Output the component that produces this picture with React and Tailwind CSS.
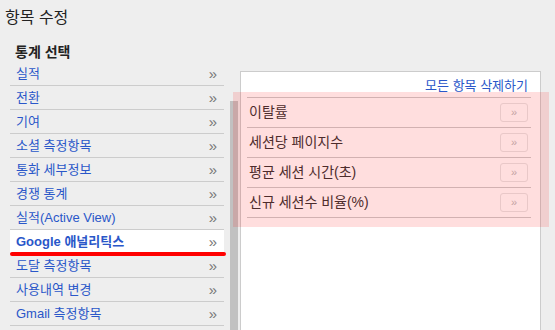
const leftItems = [
  '실적',
  '전환',
  '기여',
  '소셜 측정항목',
  '통화 세부정보',
  '경쟁 통계',
  '실적(Active View)',
  'Google 애널리틱스',
  '도달 측정항목',
  '사용내역 변경',
  'Gmail 측정항목',
]

const selected = ['이탈률', '세션당 페이지수', '평균 세션 시간(초)', '신규 세션수 비율(%)']

export default function App() {
  return (
    <div
      className="relative w-[555px] h-[330px] overflow-hidden bg-[#eeeeee] text-[#222]"
      style={{ fontFamily: '"Liberation Sans", Arial, "Noto Sans CJK KR", sans-serif' }}
    >
      <div className="pl-[5px] pt-[7px] text-[16px] leading-[22px] text-[#222]">항목 수정</div>

      <div className="flex">
        {/* stat list */}
        <div className="ml-[10px] w-[214px] shrink-0">
          <div className="pl-[5px] pt-[14px] pb-[1px] text-[14px] leading-[18px] font-bold text-[#222]">
            통계 선택
          </div>
          {leftItems.map((item) => {
            const active = item === 'Google 애널리틱스'
            return (
              <div
                key={item}
                className={`relative flex items-center justify-between h-[24px] pl-[6px] pr-[7px] border-b border-[#cccccc] text-[13px] ${
                  active ? 'bg-white' : ''
                }`}
              >
                <span className={`text-[#2a57c9] ${active ? 'font-semibold' : ''}`}>{item}</span>
                <span className="text-[#777] text-[15px] leading-none">»</span>
                {active && (
                  <div className="absolute left-0 -right-[2px] -bottom-[3px] h-[4px] rounded-full bg-[#ff0000]" />
                )}
              </div>
            )
          })}
        </div>

        {/* scrollbar */}
        <div className="ml-[6px] mt-[72px] w-[8px] h-[300px] shrink-0 bg-[#c1c1c1]" />

        {/* selected panel */}
        <div className="ml-[2px] mt-[42px] w-[301px] h-[300px] shrink-0 bg-white border border-[#cccccc]">
          <div className="flex justify-end pr-[12px] pt-[5px] h-[25px] text-[13px] leading-[18px] text-[#2a57c9]">
            모든 항목 삭제하기
          </div>
          <div className="ml-[6px] mr-[9px] border-t border-[#cccccc]">
            {selected.map((item) => (
              <div
                key={item}
                className="flex items-center justify-between h-[30px] pl-[2px] pr-[3px] border-b border-[#cccccc]"
              >
                <span className="text-[14px] text-[#333]">{item}</span>
                <span className="flex items-center justify-center w-[28px] h-[19px] rounded-[3px] border border-[#e6e6e6] text-[11px] text-[#bbb]">
                  »
                </span>
              </div>
            ))}
          </div>
        </div>
      </div>

      {/* highlight overlay */}
      <div className="absolute left-[233px] top-[92px] w-[316px] h-[135px] bg-[rgba(255,0,0,0.13)]" />
    </div>
  )
}
